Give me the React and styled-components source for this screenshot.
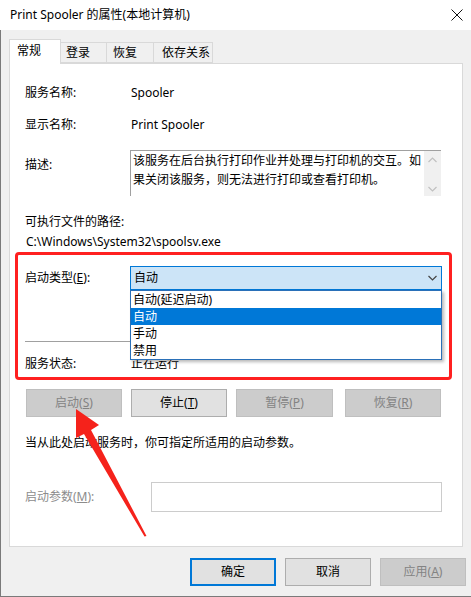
import React from 'react';
import styled, { createGlobalStyle } from 'styled-components';

const GlobalStyle = createGlobalStyle`
  html, body {
    margin: 0;
    padding: 0;
    width: 471px;
    height: 597px;
    overflow: hidden;
    background: #f0f0f0;
  }
  * {
    box-sizing: border-box;
  }
  body {
    font-family: "Noto Sans", "Noto Sans CJK SC", sans-serif;
    font-size: 12px;
    color: #000;
  }
`;

const Window = styled.div`
  position: relative;
  width: 471px;
  height: 597px;
`;

const TitleBar = styled.div`
  height: 30px;
  background: #fff;
  display: flex;
  align-items: center;
  justify-content: space-between;
  padding: 0 8px 0 10px;
`;

const Title = styled.span`
  font-size: 12px;
  line-height: 16px;
`;

const Body = styled.div`
  height: 567px;
  background: #f0f0f0;
  border-left: 1px solid #7a7a7a;
  border-bottom: 1px solid #7a7a7a;
  padding: 9px 8px 0 8px;
  display: flex;
  flex-direction: column;
`;

const TabStrip = styled.div`
  display: flex;
  align-items: flex-end;
  height: 24px;
`;

const Tab = styled.div`
  position: relative;
  width: ${(p) => p.w}px;
  height: ${(p) => (p.active ? 25 : 21)}px;
  margin-bottom: ${(p) => (p.active ? -1 : 0)}px;
  margin-left: ${(p) => (p.first ? 0 : -1)}px;
  z-index: ${(p) => (p.active ? 2 : 1)};
  padding-left: ${(p) => p.pad}px;
  background: ${(p) => (p.active ? '#fff' : '#f0f0f0')};
  border: 1px solid #d9d9d9;
  border-bottom: ${(p) => (p.active ? 'none' : '1px solid #d9d9d9')};
  line-height: ${(p) => (p.active ? 22 : 19)}px;
  font-size: 12px;
`;

const Panel = styled.div`
  height: 484px;
  background: #fff;
  border: 1px solid #d9d9d9;
  padding: 0 20px 0 15px;
  display: flex;
  flex-direction: column;
`;

const Row = styled.div`
  display: flex;
  align-items: ${(p) => (p.top ? 'flex-start' : 'center')};
  height: ${(p) => p.h || 20}px;
  margin-top: ${(p) => p.mt || 0}px;
`;

const Label = styled.div`
  width: ${(p) => p.w || 105}px;
  flex-shrink: 0;
  line-height: 20px;
  margin-top: ${(p) => p.mt || 0}px;
  color: ${(p) => (p.disabled ? '#8c8c8c' : '#000')};
`;

const Value = styled.div`
  padding-left: 1px;
  line-height: 20px;
`;

const Text = styled.div`
  line-height: 20px;
  height: 20px;
  margin-top: ${(p) => p.mt || 0}px;
  padding-left: ${(p) => p.pl || 0}px;
`;

const DescBox = styled.div`
  flex: 1;
  margin-right: 1px;
  height: 46px;
  display: flex;
  border-top: 1px solid #a0a0a0;
  border-left: 1px solid #a0a0a0;
`;

const DescText = styled.div`
  flex: 1;
  padding: 0 0 0 2px;
  line-height: 19px;
  overflow: hidden;
`;

const ScrollBar = styled.div`
  width: 17px;
  background: #f0f0f0;
  display: flex;
  flex-direction: column;
  justify-content: space-between;
  align-items: center;
  padding: 6px 0 4px;
`;

const ComboWrap = styled.div`
  position: relative;
  flex: 1;
  height: 24px;
`;

const Combo = styled.div`
  height: 24px;
  background: #cce4f7;
  border: 1px solid #0078d7;
  display: flex;
  align-items: center;
  justify-content: space-between;
  padding: 0 4px 0 3px;
  line-height: 20px;
`;

const DropList = styled.div`
  position: absolute;
  top: 24px;
  left: 0;
  right: 0;
  background: #fff;
  border: 1px solid #2a70b8;
  box-shadow: 2px 2px 3px rgba(0, 0, 0, 0.28);
  z-index: 3;
`;

const DropItem = styled.div`
  height: 17px;
  line-height: 17px;
  padding-left: 2px;
  background: ${(p) => (p.selected ? '#0078d7' : '#fff')};
  color: ${(p) => (p.selected ? '#fff' : '#000')};
`;

const Separator = styled.div`
  height: 1px;
  background: #a0a0a0;
  margin-top: ${(p) => p.mt}px;
`;

const ButtonRow = styled.div`
  display: flex;
  gap: 9px;
  height: 28px;
  margin: 15px 1px 0 1px;
`;

const Button = styled.div`
  width: ${(p) => p.w || 96}px;
  height: 28px;
  margin-left: ${(p) => (p.push ? 'auto' : '0')};
  display: flex;
  align-items: center;
  justify-content: center;
  background: ${(p) => (p.disabled ? '#cccccc' : '#e1e1e1')};
  border: ${(p) =>
    p.primary ? '2px solid #0078d7' : p.disabled ? '1px solid #bfbfbf' : '1px solid #adadad'};
  color: ${(p) => (p.disabled ? '#838383' : '#000')};
  font-size: 12px;
  line-height: 16px;
`;

const Input = styled.div`
  flex: 1;
  height: 30px;
  border: 1px solid #cccccc;
  background: #fff;
`;

const Footer = styled.div`
  display: flex;
  justify-content: flex-end;
  gap: 9px;
  margin: 11px -3px 0 0;
`;

const Highlight = styled.div`
  position: absolute;
  left: 15px;
  top: 252px;
  width: 437px;
  height: 128px;
  border: 3px solid #ff2020;
  border-radius: 4px;
  pointer-events: none;
  z-index: 4;
`;

const Overlay = styled.svg`
  position: absolute;
  left: 0;
  top: 0;
  pointer-events: none;
  z-index: 5;
`;

const Chevron = ({ up, color = '#c0c0c0', size = 9 }) => (
  <svg width={size} height={6} viewBox="0 0 9 6">
    <polyline
      points={up ? '0.5,5 4.5,1 8.5,5' : '0.5,1 4.5,5 8.5,1'}
      fill="none"
      stroke={color}
      strokeWidth="1.2"
    />
  </svg>
);

const CloseIcon = () => (
  <svg width="12" height="12" viewBox="0 0 12 12">
    <path d="M0.5 0.5 L11.5 11.5 M11.5 0.5 L0.5 11.5" stroke="#111" strokeWidth="1" />
  </svg>
);

const tabs = [
  { label: '常规', w: 52, pad: 7, active: true },
  { label: '登录', w: 47, pad: 5 },
  { label: '恢复', w: 48, pad: 6 },
  { label: '依存关系', w: 60, pad: 8 },
];

const startTypes = ['自动(延迟启动)', '自动', '手动', '禁用'];

const App = () => {
  return (
    <Window>
      <GlobalStyle />
      <TitleBar>
        <Title>Print Spooler 的属性(本地计算机)</Title>
        <CloseIcon />
      </TitleBar>
      <Body>
        <TabStrip>
          {tabs.map((t, i) => (
            <Tab key={t.label} w={t.w} pad={t.pad} active={t.active} first={i === 0}>
              {t.label}
            </Tab>
          ))}
        </TabStrip>
        <Panel>
          <Row mt={19}>
            <Label>服务名称:</Label>
            <Value>Spooler</Value>
          </Row>
          <Row mt={12}>
            <Label>显示名称:</Label>
            <Value>Print Spooler</Value>
          </Row>
          <Row mt={15} h={46} top>
            <Label mt={5}>描述:</Label>
            <DescBox>
              <DescText>
                该服务在后台执行打印作业并处理与打印机的交互。如果关闭该服务，则无法进行打印或查看打印机。
              </DescText>
              <ScrollBar>
                <Chevron up />
                <Chevron />
              </ScrollBar>
            </DescBox>
          </Row>
          <Text mt={16}>可执行文件的路径:</Text>
          <Text pl={1}>C:\Windows\System32\spoolsv.exe</Text>
          <Row mt={14} h={24}>
            <Label>
              启动类型(<u>E</u>):
            </Label>
            <ComboWrap>
              <Combo>
                <span>自动</span>
                <Chevron color="#444" />
              </Combo>
              <DropList>
                {startTypes.map((s) => (
                  <DropItem key={s} selected={s === '自动'}>
                    {s}
                  </DropItem>
                ))}
              </DropList>
            </ComboWrap>
          </Row>
          <Separator mt={51} />
          <Row mt={12}>
            <Label>服务状态:</Label>
            <Value>正在运行</Value>
          </Row>
          <ButtonRow>
            <Button disabled>
              启动(<u>S</u>)
            </Button>
            <Button>
              停止(<u>T</u>)
            </Button>
            <Button disabled w={97}>
              暂停(<u>P</u>)
            </Button>
            <Button disabled push>
              恢复(<u>R</u>)
            </Button>
          </ButtonRow>
          <Text mt={16}>当从此处启动服务时，你可指定所适用的启动参数。</Text>
          <Row mt={29} h={30}>
            <Label w={126} disabled>
              启动参数(<u>M</u>):
            </Label>
            <Input />
          </Row>
        </Panel>
        <Footer>
          <Button w={86} primary>
            确定
          </Button>
          <Button w={86}>取消</Button>
          <Button w={86} disabled>
            应用(<u>A</u>)
          </Button>
        </Footer>
      </Body>
      <Highlight />
      <Overlay width="471" height="597" viewBox="0 0 471 597">
        <polygon
          points="76,409 99,425 91,430 146.5,536 144.5,536.5 84,434 76,438"
          fill="#f5221b"
        />
      </Overlay>
    </Window>
  );
};

export default App;
